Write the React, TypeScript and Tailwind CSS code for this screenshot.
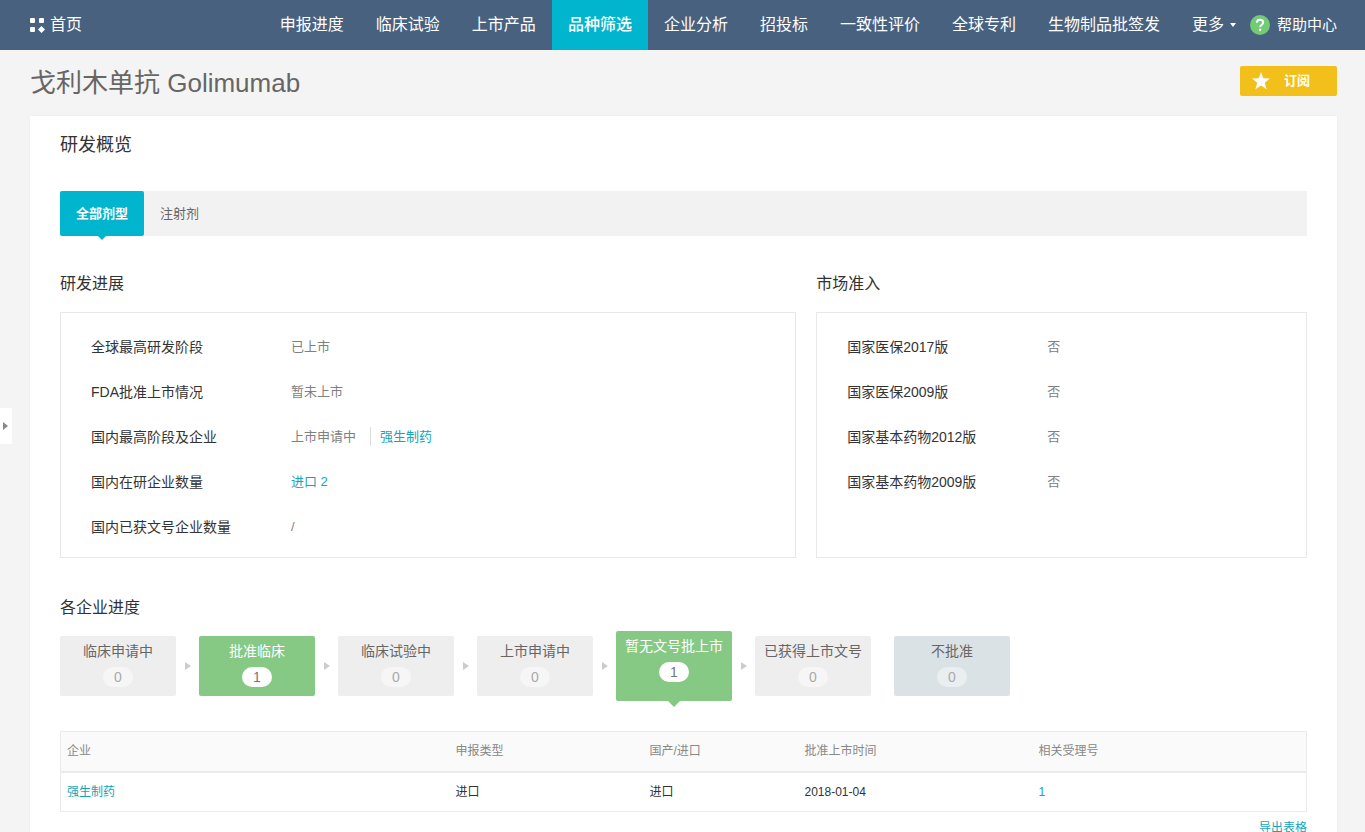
import { useState } from "react"
import clsx from "clsx"

const navItems = [
    "申报进度",
    "临床试验",
    "上市产品",
    "品种筛选",
    "企业分析",
    "招投标",
    "一致性评价",
    "全球专利",
    "生物制品批签发",
]

const forms = ["全部剂型", "注射剂"]

const access = [
    { label: "国家医保2017版", value: "否" },
    { label: "国家医保2009版", value: "否" },
    { label: "国家基本药物2012版", value: "否" },
    { label: "国家基本药物2009版", value: "否" },
]

const steps = [
    { name: "临床申请中", count: 0 },
    { name: "批准临床", count: 1 },
    { name: "临床试验中", count: 0 },
    { name: "上市申请中", count: 0 },
    { name: "暂无文号批上市", count: 1 },
    { name: "已获得上市文号", count: 0 },
    { name: "不批准", count: 0, rejected: true },
]

const Header = () => (
    <header className="flex h-[50px] items-center justify-between bg-[#48617f] pl-[30px] pr-7 text-white">
        <a
            href="#"
            className="flex items-center gap-1 text-base"
        >
            <svg
                className="size-4"
                viewBox="0 0 16 16"
                fill="currentColor"
            >
                <rect x="0" y="1" width="5" height="5" rx="1" />
                <rect x="9" y="1" width="5" height="5" rx="1" />
                <rect x="0" y="10" width="5" height="5" rx="1" />
                <path d="M11.5 9 15 12.5 11.5 16 8 12.5z" />
            </svg>
            首页
        </a>
        <div className="flex items-center">
            <nav className="flex text-base leading-[50px]">
                {navItems.map((item) => (
                    <a
                        key={item}
                        href="#"
                        className={clsx(
                            "px-4 whitespace-nowrap",
                            item === "品种筛选" && "bg-[#00b5cd] font-medium"
                        )}
                    >
                        {item}
                    </a>
                ))}
                <button
                    type="button"
                    className="flex items-center gap-1.5 pl-4 pr-3.5 whitespace-nowrap"
                >
                    更多
                    <svg
                        className="h-1 w-1.5"
                        viewBox="0 0 6 4"
                        fill="currentColor"
                    >
                        <path d="M0 0h6L3 4z" />
                    </svg>
                </button>
            </nav>
            <a
                href="#"
                className="flex items-center gap-[7px] text-[15px] whitespace-nowrap"
            >
                <svg
                    className="size-5"
                    viewBox="0 0 20 20"
                    fill="none"
                >
                    <circle cx="10" cy="10" r="10" fill="#72cb75" />
                    <path
                        d="M6.9 7.7C6.9 5.8 8.2 4.8 10 4.8s3.2 1 3.2 2.7c0 2.3-3.1 2.3-3.1 4.6"
                        stroke="#fff"
                        strokeWidth="1.9"
                    />
                    <circle cx="10.1" cy="14.7" r="1.2" fill="#fff" />
                </svg>
                帮助中心
            </a>
        </div>
    </header>
)

const Row = ({
    label,
    children,
}: {
    label: string
    children: React.ReactNode
}) => (
    <div className="flex h-[45px] items-center">
        <dt className="w-[200px] text-sm text-[#333]">{label}</dt>
        <dd className="flex items-center text-[13px] text-[#808080]">
            {children}
        </dd>
    </div>
)

const StepArrow = () => (
    <svg
        className="h-2.5 w-1.5"
        viewBox="0 0 6 10"
        fill="#ccc"
    >
        <path d="M0 1l6 4-6 4z" />
    </svg>
)

export default function App() {
    const [form, setForm] = useState(forms[0])
    const [step, setStep] = useState("暂无文号批上市")

    return (
        <div className="relative min-h-screen bg-[#f4f4f4] font-['Liberation_Sans','Noto_Sans_CJK_SC',sans-serif] text-[#333]">
            <Header />

            <button
                type="button"
                aria-label="展开"
                className="fixed top-[408px] left-0 flex h-9 w-3 items-center bg-white pl-[3px]"
            >
                <svg
                    className="h-2.5 w-[5px]"
                    viewBox="0 0 5 10"
                    fill="#888"
                >
                    <path d="M0 1l5 4-5 4z" />
                </svg>
            </button>

            <main className="pr-7 pl-[30px]">
                <div className="flex h-[66px] items-center justify-between">
                    <h1 className="text-[26px] text-[#666]">
                        戈利木单抗 Golimumab
                    </h1>
                    <button
                        type="button"
                        className="mb-1 flex h-[30px] w-[97px] items-center gap-3.5 rounded-xs bg-[#f3bf1b] pl-3 text-[13px] font-bold text-white"
                    >
                        <svg
                            className="size-[18px]"
                            viewBox="0 0 18 18"
                            fill="currentColor"
                        >
                            <path d="M9 0l2.3 6.3 6.7.3-5.2 4.1 1.8 6.5L9 13.5l-5.6 3.7 1.8-6.5L0 6.6l6.7-.3z" />
                        </svg>
                        订阅
                    </button>
                </div>

                <div className="bg-white px-[30px] pt-[15px] pb-8 shadow-[0_0_2px_rgba(0,0,0,0.06)]">
                    <h2 className="text-lg leading-7">研发概览</h2>

                    <div
                        role="tablist"
                        className="mt-8 flex h-[45px] bg-[#f2f2f2] text-[13px]"
                    >
                        {forms.map((f) => (
                            <button
                                key={f}
                                type="button"
                                role="tab"
                                aria-selected={f === form}
                                onClick={() => setForm(f)}
                                className={clsx(
                                    "relative px-4",
                                    f === form
                                        ? "rounded-xs bg-[#00b5cd] font-bold text-white"
                                        : "text-[#666]"
                                )}
                            >
                                {f}
                                {f === form && (
                                    <span className="absolute top-full left-1/2 -translate-x-1/2 border-x-4 border-t-4 border-x-transparent border-t-[#00b5cd]" />
                                )}
                            </button>
                        ))}
                    </div>

                    <div className="mt-9 grid grid-cols-[3fr_2fr] gap-5">
                        <section className="flex flex-col gap-4">
                            <h3 className="text-base">研发进展</h3>
                            <dl className="grow border border-[#e8e8e8] px-[30px] pt-[11px] pb-2">
                                <Row label="全球最高研发阶段">已上市</Row>
                                <Row label="FDA批准上市情况">暂未上市</Row>
                                <Row label="国内最高阶段及企业">
                                    上市申请中
                                    <a
                                        href="#"
                                        className="ml-3.5 border-l border-[#ddd] pl-[9px] text-[#14a5b8]"
                                    >
                                        强生制药
                                    </a>
                                </Row>
                                <Row label="国内在研企业数量">
                                    <a
                                        href="#"
                                        className="text-[#14a5b8]"
                                    >
                                        进口 2
                                    </a>
                                </Row>
                                <Row label="国内已获文号企业数量">/</Row>
                            </dl>
                        </section>
                        <section className="flex flex-col gap-4">
                            <h3 className="text-base">市场准入</h3>
                            <dl className="grow border border-[#e8e8e8] px-[30px] pt-[11px] pb-2">
                                {access.map(({ label, value }) => (
                                    <Row
                                        key={label}
                                        label={label}
                                    >
                                        {value}
                                    </Row>
                                ))}
                            </dl>
                        </section>
                    </div>

                    <h3 className="mt-[38px] text-base">各企业进度</h3>
                    <div className="mt-[11px] flex h-[70px] items-center">
                        {steps.map(({ name, count, rejected }, idx) => (
                            <div
                                key={name}
                                className="flex items-center"
                            >
                                {idx > 0 && (
                                    <div className="flex w-[23px] justify-center">
                                        {!rejected && <StepArrow />}
                                    </div>
                                )}
                                <button
                                    type="button"
                                    onClick={() => setStep(name)}
                                    className={clsx(
                                        "relative flex w-[116px] flex-col items-center gap-1.5 rounded-xs pt-[5px] text-sm",
                                        name === step ? "h-[70px]" : "h-[60px]",
                                        count > 0
                                            ? "bg-[#85c985] text-white"
                                            : rejected
                                              ? "bg-[#dbe2e6] text-[#666]"
                                              : "bg-[#eee] text-[#666]"
                                    )}
                                >
                                    {name}
                                    <span
                                        className={clsx(
                                            "w-[30px] rounded-full",
                                            count > 0
                                                ? "bg-white text-[#777]"
                                                : rejected
                                                  ? "bg-[#e9eef1] text-[#aaa]"
                                                  : "bg-[#f6f6f6] text-[#aaa]"
                                        )}
                                    >
                                        {count}
                                    </span>
                                    {name === step && (
                                        <span className="absolute top-full left-1/2 -translate-x-1/2 border-x-6 border-t-6 border-x-transparent border-t-[#85c985]" />
                                    )}
                                </button>
                            </div>
                        ))}
                    </div>

                    <table className="mt-[30px] w-full table-fixed border-collapse border border-[#ebebeb] text-left text-xs">
                        <thead>
                            <tr className="h-10 border-b-2 border-[#ebebeb] bg-[#fafafa] text-[#888]">
                                <th className="w-[389px] px-1.5 font-normal">
                                    企业
                                </th>
                                <th className="w-[194px] px-1.5 font-normal">
                                    申报类型
                                </th>
                                <th className="w-[155px] px-1.5 font-normal">
                                    国产/进口
                                </th>
                                <th className="w-[234px] px-1.5 font-normal">
                                    批准上市时间
                                </th>
                                <th className="px-1.5 font-normal">
                                    相关受理号
                                </th>
                            </tr>
                        </thead>
                        <tbody>
                            <tr className="h-10">
                                <td className="px-1.5">
                                    <a
                                        href="#"
                                        className="text-[#14a5b8]"
                                    >
                                        强生制药
                                    </a>
                                </td>
                                <td className="px-1.5">进口</td>
                                <td className="px-1.5">进口</td>
                                <td className="px-1.5">2018-01-04</td>
                                <td className="px-1.5">
                                    <a
                                        href="#"
                                        className="text-[#14a5b8]"
                                    >
                                        1
                                    </a>
                                </td>
                            </tr>
                        </tbody>
                    </table>
                    <div className="mt-2 flex justify-end">
                        <a
                            href="#"
                            className="text-xs text-[#14a5b8]"
                        >
                            导出表格
                        </a>
                    </div>
                </div>
            </main>
        </div>
    )
}
